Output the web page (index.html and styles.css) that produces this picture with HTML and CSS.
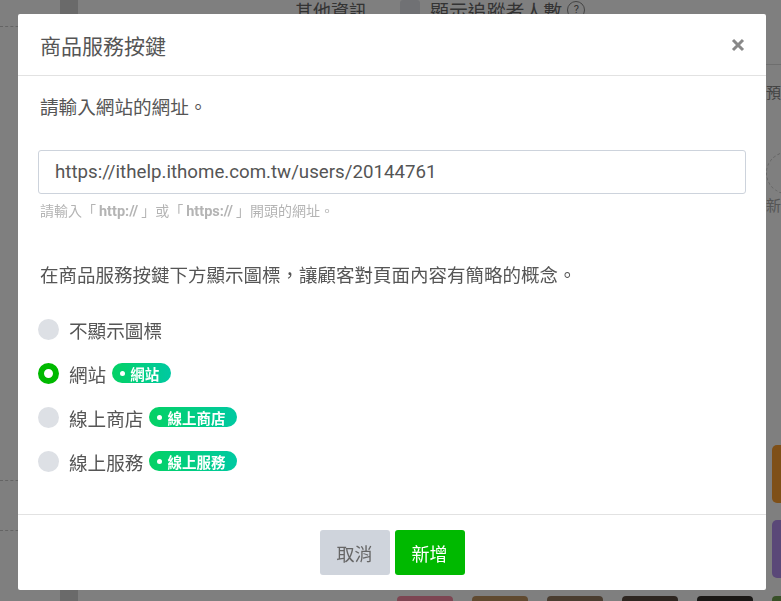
FILE: index.html
```html
<!DOCTYPE html>
<html>

<head>
  <meta charset="utf-8">
  <title>商品服務按鍵</title>
  <meta name="viewport" content="width=device-width, initial-scale=1">
  <link rel="stylesheet" href="styles.css">
</head>

<body>
  <div class="page">
    <div class="rail">
      <div class="dash"></div>
      <div class="dash"></div>
      <div class="dash"></div>
    </div>
    <div class="rail-dark"></div>
    <div class="main">
      <div class="toprow">
        <span class="label">其他資訊</span>
        <span class="check"></span>
        <span class="label follow">顯示追蹤者人數</span>
        <span class="qmark">?</span>
      </div>
      <div class="side">
        <div class="side-line"></div>
        <div class="side-text">預算</div>
        <div class="side-add"><span class="ring">+</span>新增</div>
        <div class="tile orange"></div>
        <div class="tile purple"></div>
      </div>
      <div class="tiles">
        <span class="swatch pink"></span>
        <span class="swatch tan"></span>
        <span class="swatch brown"></span>
        <span class="swatch dark"></span>
        <span class="swatch black"></span>
        <span class="swatch green"></span>
      </div>
    </div>
  </div>

  <div class="overlay">
    <div class="modal">
      <div class="modal-header">
        <h2>商品服務按鍵</h2>
        <button class="close" aria-label="close">
          <svg width="14" height="14" viewBox="0 0 14 14">
            <path d="M2 2 L12 12 M12 2 L2 12" stroke="#888" stroke-width="3" stroke-linecap="butt" />
          </svg>
        </button>
      </div>
      <div class="modal-body">
        <p class="intro">請輸入網站的網址。</p>
        <input class="url" type="text" value="https://ithelp.ithome.com.tw/users/20144761">
        <p class="help">請輸入「<b>http://</b>」或「<b>https://</b>」開頭的網址。</p>
        <p class="desc">在商品服務按鍵下方顯示圖標，讓顧客對頁面內容有簡略的概念。</p>
        <ul class="options">
          <li><span class="radio"></span>不顯示圖標</li>
          <li><span class="radio checked"></span>網站<span class="badge">網站</span></li>
          <li><span class="radio"></span>線上商店<span class="badge">線上商店</span></li>
          <li><span class="radio"></span>線上服務<span class="badge">線上服務</span></li>
        </ul>
      </div>
      <div class="modal-footer">
        <button class="btn btn-cancel">取消</button>
        <button class="btn btn-ok">新增</button>
      </div>
    </div>
  </div>
</body>

</html>
```

FILE: styles.css
```css
html {
  font-family: Roboto, "Noto Sans CJK TC", sans-serif;
}

body {
  margin: 0;
  background: #fff;
  overflow: hidden;
}

/* page behind the dialog */
.page {
  display: flex;
  height: 601px;
}

.rail {
  width: 60px;
  padding-top: 26px;
}

.dash {
  border-top: 1px dashed #c8c8c8;
  height: 0;
  margin-bottom: 49px;
}

.dash:first-child {
  margin-bottom: 453px;
}

.rail-dark {
  width: 18px;
  background: #d4d4d4;
}

.main {
  flex: 1;
  position: relative;
  overflow: hidden;
}

.toprow {
  display: flex;
  align-items: center;
  gap: 10px;
  padding: 0 0 0 217px;
  height: 24px;
  margin-top: -2px;
  font-size: 18px;
  color: #666;
}

.toprow .label {
  margin-right: 23px;
}

.toprow .follow {
  font-size: 18.9px;
  margin-right: 0;
}

.check {
  width: 20px;
  height: 20px;
  border-radius: 3px;
  background: #e0e3e8;
}

.qmark {
  width: 16px;
  height: 16px;
  border: 1px solid #888;
  border-radius: 50%;
  font-size: 11px;
  text-align: center;
  line-height: 16px;
  margin-left: -5px;
}

.side {
  position: absolute;
  left: 688px;
  top: 0;
  width: 40px;
  display: flex;
  flex-direction: column;
}

.side-line {
  margin-top: 64px;
  border-top: 1px solid #ddd;
}

.side-text {
  margin-top: 16px;
  font-size: 15px;
  color: #888;
}

.side-add {
  margin-top: 50px;
  font-size: 15px;
  color: #aaa;
}

.ring {
  display: block;
  width: 40px;
  height: 40px;
  border: 1px dashed #ccc;
  border-radius: 50%;
  text-align: center;
  line-height: 40px;
}

.tile {
  height: 58px;
  margin-left: 6px;
  width: 40px;
  border-radius: 5px;
}

.orange {
  margin-top: 230px;
  background: #fea030;
}

.purple {
  margin-top: 17px;
  background: #b490f0;
}

.tiles {
  position: absolute;
  left: 319px;
  top: 596px;
  display: flex;
  gap: 19px;
}

.swatch {
  width: 56px;
  height: 20px;
  border-radius: 4px;
}

.pink { background: #fa8aa4; }
.tan { background: #c09460; }
.brown { background: #947a60; }
.dark { background: #5c4c40; }
.black { background: #34302c; }
.green { background: #70a050; }

/* dialog */
.overlay {
  position: fixed;
  inset: 0;
  background: rgba(0, 0, 0, .5);
  padding: 14px 15px 0 18px;
}

.modal {
  width: 748px;
  height: 576px;
  background: #fff;
  border-radius: 2px;
  display: flex;
  flex-direction: column;
}

.modal-header {
  height: 61px;
  display: flex;
  align-items: center;
  justify-content: space-between;
  padding: 0 21px 0 22px;
  border-bottom: 1px solid #e2e2e2;
}

.modal-header h2 {
  margin: 0;
  font-size: 21px;
  font-weight: normal;
  color: #555;
}

.close {
  border: none;
  background: none;
  padding: 0;
  width: 14px;
  height: 14px;
  display: flex;
}

.modal-body {
  flex: 1;
  padding: 19px 20px 0 20px;
  color: #555;
}

.intro {
  margin: 0 0 0 2px;
  font-size: 18.6px;
  line-height: 26px;
}

.url {
  display: block;
  box-sizing: border-box;
  width: 100%;
  height: 44px;
  margin-top: 29px;
  padding: 0 16px;
  border: 1px solid #cdd3dc;
  border-radius: 3px;
  font-family: Roboto, "Noto Sans CJK TC", sans-serif;
  font-size: 18.7px;
  color: #555;
  outline: none;
}

.help {
  margin: 7px 0 0 2px;
  font-size: 14px;
  line-height: 20px;
  color: #b4b4b4;
}

.help b {
  margin: 0 3px;
  font-size: 14.5px;
}

.desc {
  margin: 41px 0 0 2px;
  font-size: 18.5px;
  line-height: 26px;
  color: #555;
}

.options {
  list-style: none;
  margin: 18px 0 0 0;
  padding: 0;
}

.options li {
  display: flex;
  align-items: center;
  height: 44px;
  font-size: 18.6px;
  color: #555;
}

.radio {
  box-sizing: border-box;
  width: 21px;
  height: 21px;
  border-radius: 50%;
  background: #dde0e5;
  margin-right: 10px;
}

.radio.checked {
  background: #fff;
  border: 6px solid #00b900;
}

.badge {
  display: inline-flex;
  align-items: center;
  gap: 5px;
  height: 20px;
  margin-left: 6px;
  padding: 0 12px 0 8px;
  border-radius: 10px;
  background: linear-gradient(90deg, #04d164, #00c9a2);
  color: #fff;
  font-size: 14.5px;
  font-weight: bold;
}

.badge::before {
  content: "";
  width: 5px;
  height: 5px;
  border-radius: 50%;
  background: #fff;
}

.modal-footer {
  height: 75px;
  border-top: 1px solid #e2e2e2;
  display: flex;
  justify-content: center;
  align-items: center;
  gap: 5px;
}

.btn {
  width: 70px;
  height: 45px;
  border: none;
  border-radius: 3px;
  font-family: Roboto, "Noto Sans CJK TC", sans-serif;
  font-size: 18px;
}

.btn-cancel {
  background: #cfd4dc;
  color: #666;
}

.btn-ok {
  background: #00b900;
  color: #fff;
}
```
